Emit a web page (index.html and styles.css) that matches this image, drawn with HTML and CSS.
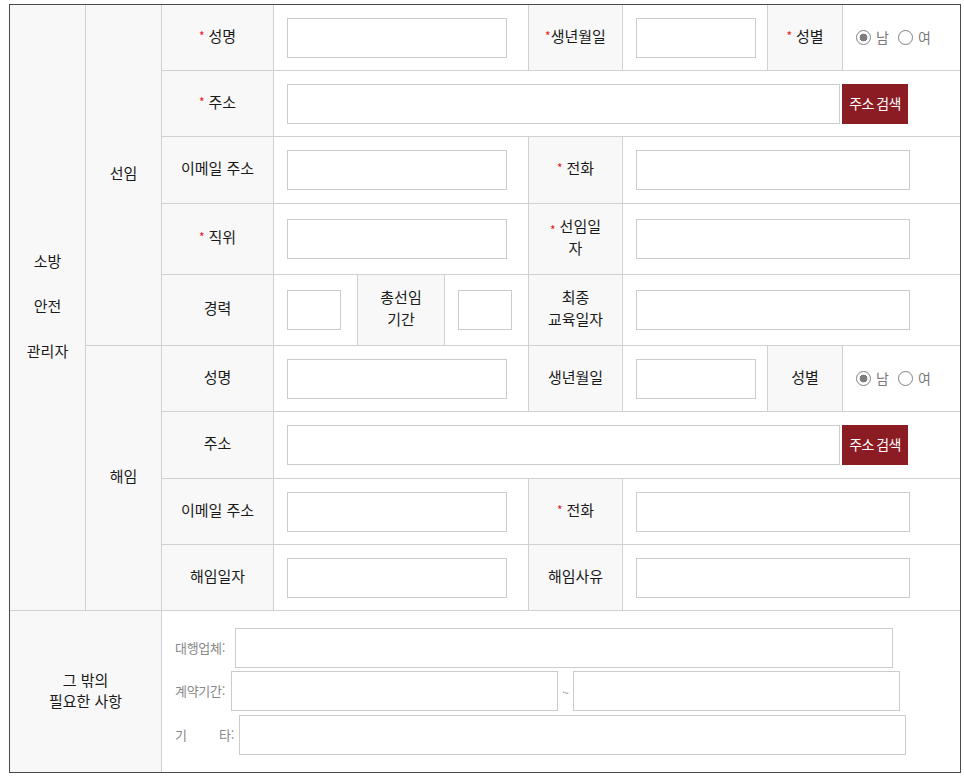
FILE: index.html
```html
<!DOCTYPE html>
<html lang="ko">
<head>
<meta charset="utf-8">
<title>소방안전관리자 선임</title>
<link rel="stylesheet" href="styles.css">
</head>
<body>
<div class="form-wrap">
  <div class="grid">
    <div class="cell th g-main">소방<br>안전<br>관리자</div>
    <div class="cell th g-sel">선임</div>
    <div class="cell th g-dis">해임</div>

    <!-- 선임 row 1 -->
    <div class="cell th"><span class="req">*</span>성명</div>
    <div class="cell td span3"><input class="inp w-220" type="text"></div>
    <div class="cell th"><span class="req tight">*</span>생년월일</div>
    <div class="cell td"><input class="inp w-120" type="text"></div>
    <div class="cell th"><span class="req">*</span>성별</div>
    <div class="cell td end">
      <label class="rad"><input class="radio" type="radio" name="g1" checked><span>남</span></label>
      <label class="rad"><input class="radio" type="radio" name="g1"><span>여</span></label>
    </div>

    <!-- row 2 -->
    <div class="cell th"><span class="req">*</span>주소</div>
    <div class="cell td span7 end"><input class="inp w-553" type="text"><button class="btn" type="button">주소 검색</button></div>

    <!-- row 3 -->
    <div class="cell th">이메일 주소</div>
    <div class="cell td span3"><input class="inp w-220" type="text"></div>
    <div class="cell th"><span class="req">*</span>전화</div>
    <div class="cell td span3 end"><input class="inp w-274" type="text"></div>

    <!-- row 4 -->
    <div class="cell th"><span class="req">*</span>직위</div>
    <div class="cell td span3"><input class="inp w-220" type="text"></div>
    <div class="cell th"><span><span class="req">*</span>선임일<br>자</span></div>
    <div class="cell td span3 end"><input class="inp w-274" type="text"></div>

    <!-- row 5 -->
    <div class="cell th">경력</div>
    <div class="cell td"><input class="inp w-54" type="text"></div>
    <div class="cell th">총선임<br>기간</div>
    <div class="cell td"><input class="inp w-54" type="text"></div>
    <div class="cell th">최종<br>교육일자</div>
    <div class="cell td span3 end"><input class="inp w-274" type="text"></div>

    <!-- 해임 row 6 -->
    <div class="cell th">성명</div>
    <div class="cell td span3"><input class="inp w-220" type="text"></div>
    <div class="cell th">생년월일</div>
    <div class="cell td"><input class="inp w-120" type="text"></div>
    <div class="cell th">성별</div>
    <div class="cell td end">
      <label class="rad"><input class="radio" type="radio" name="g2" checked><span>남</span></label>
      <label class="rad"><input class="radio" type="radio" name="g2"><span>여</span></label>
    </div>

    <!-- row 7 -->
    <div class="cell th">주소</div>
    <div class="cell td span7 end"><input class="inp w-553" type="text"><button class="btn" type="button">주소 검색</button></div>

    <!-- row 8 -->
    <div class="cell th">이메일 주소</div>
    <div class="cell td span3"><input class="inp w-220" type="text"></div>
    <div class="cell th"><span class="req">*</span>전화</div>
    <div class="cell td span3 end"><input class="inp w-274" type="text"></div>

    <!-- row 9 -->
    <div class="cell th">해임일자</div>
    <div class="cell td span3"><input class="inp w-220" type="text"></div>
    <div class="cell th">해임사유</div>
    <div class="cell td span3 end"><input class="inp w-274" type="text"></div>

    <!-- row 10 -->
    <div class="cell th g-etc foot">그 밖의<br>필요한 사항</div>
    <div class="cell g-etc-body foot end">
      <div class="line">
        <span class="flabel fl-a">대행업체:</span><input class="inp w-658" type="text">
      </div>
      <div class="line">
        <span class="flabel fl-b">계약기간:</span><input class="inp w-327" type="text"><span class="tilde">~</span><input class="inp w-327" type="text">
      </div>
      <div class="line line-3">
        <span class="flabel fl-c"><span>기</span><span>타:</span></span><input class="inp w-667" type="text">
      </div>
    </div>
  </div>
</div>
</body>
</html>
```
FILE: styles.css
```css
* {
  box-sizing: border-box;
}

body {
  margin: 0;
  background: #fff;
  color: #1a1a1a;
  font-family: "Noto Sans CJK KR", "Noto Sans", sans-serif;
}

.form-wrap {
  margin: 4px 0 0 9px;
  width: 952px;
  border: 1px solid #4a4a4a;
}

.grid {
  display: grid;
  grid-template-columns: 76px 76px 112px 84px 87px 84px 94px 145px 75px 117px;
  grid-template-rows: 66px 66px 67px 71px 71px 66px 67px 66px 66px 161px;
}

.cell {
  display: flex;
  align-items: center;
  border-right: 1px solid #d0d0d0;
  border-bottom: 1px solid #d0d0d0;
}

.th {
  justify-content: center;
  text-align: center;
  padding-bottom: 4px;
  background: #f8f8f8;
  font-size: 15px;
  line-height: 22px;
}

.td {
  padding-left: 13px;
  background: #fff;
}

.end {
  border-right: 0;
}

.foot {
  border-bottom: 0;
}

.span3 {
  grid-column: span 3;
}

.span7 {
  grid-column: span 7;
}

.g-main {
  grid-column: 1;
  grid-row: 1 / 10;
  line-height: 45px;
}

.g-sel {
  grid-column: 2;
  grid-row: 1 / 6;
}

.g-dis {
  grid-column: 2;
  grid-row: 6 / 10;
}

.g-etc {
  grid-column: 1 / 3;
  grid-row: 10;
  line-height: 21px;
}

.g-etc-body {
  grid-column: 3 / 11;
  grid-row: 10;
  flex-direction: column;
  align-items: flex-start;
  padding: 17px 0 0 13px;
}

.req {
  color: #e8141c;
  font-size: 12px;
  line-height: 0;
  margin-right: 4px;
  vertical-align: -3px;
}

.req.tight {
  margin-right: 0;
}

.inp {
  display: block;
  height: 40px;
  margin: 0;
  padding: 0 8px;
  border: 1px solid #cccccc;
  background: #fff;
  font-family: inherit;
  font-size: 14px;
}

.w-54 { width: 54px; }
.w-120 { width: 120px; }
.w-220 { width: 220px; }
.w-274 { width: 274px; }
.w-327 { width: 327px; }
.w-553 { width: 553px; }
.w-658 { width: 658px; }
.w-667 { width: 667px; }

.btn {
  width: 66px;
  height: 40px;
  margin-left: 2px;
  padding: 0 0 2px;
  border: 0;
  background: #8c1c23;
  color: #fff;
  font-family: inherit;
  font-size: 14px;
  letter-spacing: -0.6px;
  word-spacing: -1px;
}

.rad {
  display: flex;
  align-items: center;
  color: #7a7a7a;
  font-size: 14px;
  margin-right: 9px;
}

.rad span {
  margin-left: 5px;
  padding-bottom: 2px;
}

.radio {
  appearance: none;
  -webkit-appearance: none;
  width: 15px;
  height: 15px;
  margin: 0;
  border: 1.5px solid #808080;
  border-radius: 50%;
  background: #fff;
}

.radio:checked {
  background: radial-gradient(circle, #7d7d7d 0 3.6px, #fff 4.2px);
}

.line {
  display: flex;
  align-items: center;
  height: 40px;
}

.line + .line {
  margin-top: 3px;
}

.line-3.line {
  margin-top: 4px;
}

.flabel {
  color: #888;
  font-size: 13px;
  letter-spacing: -0.3px;
  padding-bottom: 2px;
}

.fl-a { width: 60px; }
.fl-b { width: 56px; }
.fl-c {
  width: 59px;
  margin-right: 5px;
  display: flex;
  justify-content: space-between;
}

.tilde {
  width: 15px;
  text-align: center;
  color: #999;
  font-size: 12px;
}
```
